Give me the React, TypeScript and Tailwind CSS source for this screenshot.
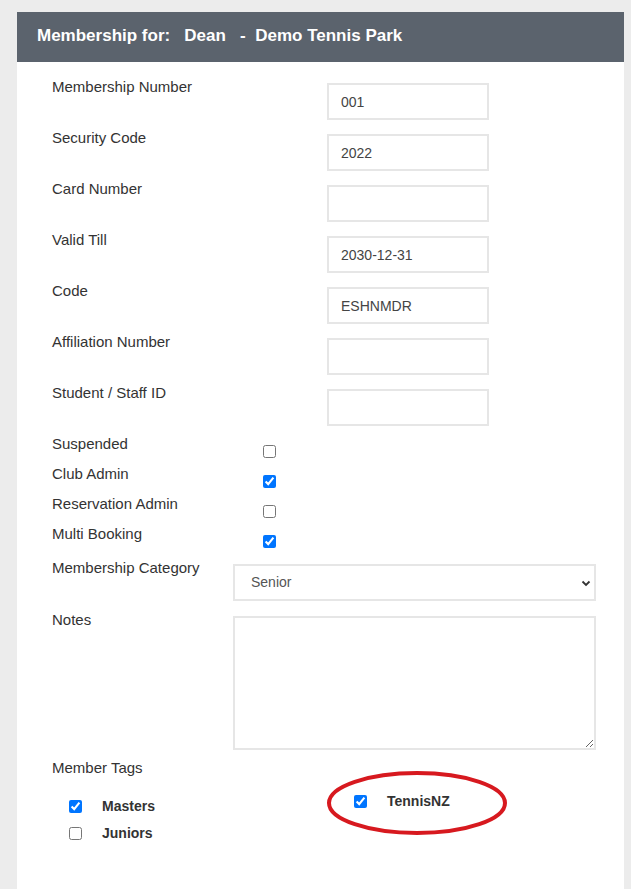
const textRows: [string, string][] = [
  ["Membership Number", "001"],
  ["Security Code", "2022"],
  ["Card Number", ""],
  ["Valid Till", "2030-12-31"],
  ["Code", "ESHNMDR"],
  ["Affiliation Number", ""],
  ["Student / Staff ID", ""],
];

const checkRows: [string, boolean][] = [
  ["Suspended", false],
  ["Club Admin", true],
  ["Reservation Admin", false],
  ["Multi Booking", true],
];

function Box({ checked }: { checked: boolean }) {
  return (
    <input
      type="checkbox"
      defaultChecked={checked}
      className="m-0 w-[13px] h-[13px]"
    />
  );
}

export default function App() {
  return (
    <div
      className="min-h-screen bg-[#ececec] pt-[12px] text-[#333]"
      style={{ fontFamily: '"Liberation Sans", Arial, sans-serif' }}
    >
      <div className="ml-[17px] w-[607px] min-h-[877px] bg-white">
        <div className="h-[50px] bg-[#5b636d] px-[20px] flex items-center">
          <h1 className="text-white font-bold text-[17px] whitespace-pre -mt-[2px]">
            {"Membership for:   Dean   -  Demo Tennis Park"}
          </h1>
        </div>

        <div className="pl-[35px] pt-[18px]">
          {textRows.map(([label, value]) => (
            <div key={label} className="flex h-[51px]">
              <label className="w-[275px] text-[15px] leading-[17px] -mt-[2px]">{label}</label>
              <input
                defaultValue={value}
                className="mt-[3px] w-[162px] h-[37px] border-2 border-[#e6e6e6] px-[12px] text-[14px] text-[#444] outline-none"
              />
            </div>
          ))}

          {checkRows.map(([label, checked]) => (
            <div key={label} className="flex h-[30px]">
              <label className="w-[211px] text-[15px] leading-[17px] -mt-[2px]">{label}</label>
              <div className="mt-[8px] flex">
                <Box checked={checked} />
              </div>
            </div>
          ))}

          <div className="flex mt-[4px]">
            <label className="w-[181px] text-[15px] leading-[17px] -mt-[2px]">Membership Category</label>
            <div className="mt-[3px] w-[363px] h-[37px] border-2 border-[#e6e6e6] flex items-center justify-between pl-[16px] pr-[3px] text-[14px] text-[#555]">
              <span>Senior</span>
              <svg width="10" height="10" viewBox="0 0 10 10">
                <path d="M1.5 3.5 L5 7 L8.5 3.5" fill="none" stroke="#333" strokeWidth="1.8" />
              </svg>
            </div>
          </div>

          <div className="flex mt-[12px]">
            <label className="w-[181px] text-[15px] leading-[17px] -mt-[2px]">Notes</label>
            <textarea className="mt-[3px] w-[363px] h-[134px] border-2 border-[#e6e6e6] outline-none" />
          </div>

          <div className="mt-[9px] text-[15px] leading-[17px]">Member Tags</div>

          <div className="flex mt-[17px]">
            <div className="w-[302px] pl-[17px]">
              <div className="flex items-center h-[27px] gap-[20px]">
                <Box checked={true} />
                <span className="text-[14px] font-bold">Masters</span>
              </div>
              <div className="flex items-center h-[27px] gap-[20px]">
                <Box checked={false} />
                <span className="text-[14px] font-bold">Juniors</span>
              </div>
            </div>
            <div className="relative mt-[-5px]">
              <div className="flex items-center h-[27px] gap-[20px]">
                <Box checked={true} />
                <span className="text-[14px] font-bold">TennisNZ</span>
              </div>
              <svg
                className="absolute left-[-28px] top-[-18px] pointer-events-none"
                width="182"
                height="66"
                viewBox="0 0 182 66"
              >
                <ellipse cx="91" cy="33" rx="88" ry="30" fill="none" stroke="#d7191f" strokeWidth="4" />
              </svg>
            </div>
          </div>
        </div>
      </div>
    </div>
  );
}
